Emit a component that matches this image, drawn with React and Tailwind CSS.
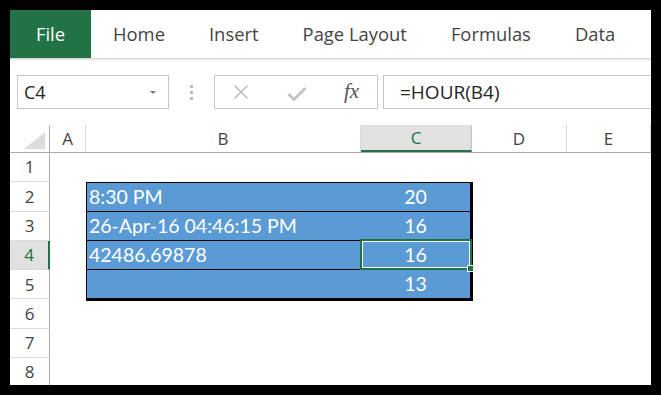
const tabs = ["Home", "Insert", "Page Layout", "Formulas", "Data"];

const columns = [
  { label: "A", width: "w-[36px]" },
  { label: "B", width: "w-[275px]" },
  { label: "C", width: "w-[111px]", active: true },
  { label: "D", width: "w-[95px]" },
  { label: "E", width: "flex-1" },
];

const rowNumbers = [1, 2, 3, 4, 5, 6, 7, 8];

const data = [
  { b: "8:30 PM", c: "20" },
  { b: "26-Apr-16 04:46:15 PM", c: "16" },
  { b: "42486.69878", c: "16", selected: true },
  { b: "", c: "13" },
];

function NameBox() {
  return (
    <div className="flex h-[34px] w-[152px] items-center justify-between border border-[#c6c6c6] pl-[6px] pr-[12px]">
      <span className="text-[18px] text-[#262626]">C4</span>
      <span className="h-0 w-0 border-x-[3px] border-t-[3px] border-x-transparent border-t-[#777]" />
    </div>
  );
}

function FormulaButtons() {
  return (
    <div className="flex h-[34px] w-[164px] items-center border border-[#c6c6c6]">
      <svg width="16" height="16" viewBox="0 0 16 16" className="ml-[18px]">
        <path d="M1.5 1.5 L14.5 14.5 M14.5 1.5 L1.5 14.5" stroke="#bdbdbd" strokeWidth="1.6" fill="none" />
      </svg>
      <svg width="20" height="16" viewBox="0 0 20 16" className="ml-[38px] mt-[4px]">
        <path d="M1.5 8 L7 13.5 L18.5 2" stroke="#c4c4c4" strokeWidth="3" fill="none" />
      </svg>
      <span className="ml-[37px] font-['Liberation_Serif',serif] text-[21px] italic text-[#555]">fx</span>
    </div>
  );
}

function ColumnHeader() {
  return (
    <div className="flex h-[28px] border-b border-[#ababab]">
      <div className="relative w-[40px] shrink-0 border-r border-[#ababab]">
        <svg width="21" height="17" viewBox="0 0 21 17" className="absolute right-[4px] bottom-[3px]">
          <polygon points="21,0 21,17 0,17" fill="#dcdcdc" />
        </svg>
      </div>
      {columns.map((col) => (
        <div
          key={col.label}
          className={`flex shrink-0 items-center justify-center border-r text-[17px] ${col.width} ${
            col.active
              ? "border-[#c0c0c0] border-b-2 border-b-[#217346] bg-[#e1e1e1] text-[#217346]"
              : "border-[#dadada] text-[#444]"
          }`}
        >
          {col.label}
        </div>
      ))}
    </div>
  );
}

function RowHeader() {
  return (
    <div className="w-[40px] shrink-0">
      {rowNumbers.map((n) => (
        <div
          key={n}
          className={`flex h-[29.3px] items-center justify-center border-b border-[#dadada] text-[17px] ${
            n === 4
              ? "border-r-2 border-r-[#217346] bg-[#e1e1e1] text-[#217346]"
              : "border-r border-r-[#ababab] text-[#444]"
          }`}
        >
          {n}
        </div>
      ))}
    </div>
  );
}

function DataBlock() {
  return (
    <div className="ml-[36px] mt-[29px] w-[387px] border-l border-r-[3px] border-b-[3px] border-black font-['Lato',sans-serif] text-[19.5px] text-white">
      {data.map((row, i) => (
        <div key={i} className="flex h-[29px] border-t border-black bg-[#5b9bd5]">
          <div className="flex w-[274px] items-center pl-[2px]">{row.b}</div>
          <div className="relative flex flex-1 items-center justify-center">
            {row.c}
            {row.selected && (
              <div className="absolute left-[-1px] top-[-2px] h-[31px] w-[112px] border-2 border-[#217346]">
                <div className="h-full w-full border border-white" />
                <div className="absolute right-[-4px] bottom-[-4px] h-[7px] w-[7px] border border-white bg-[#217346]" />
              </div>
            )}
          </div>
        </div>
      ))}
    </div>
  );
}

export default function App() {
  return (
    <div className="h-[395px] w-[661px] bg-black p-[10px] font-['Open_Sans',sans-serif]">
      <div className="flex h-full flex-col overflow-hidden bg-white">
        <nav className="flex h-[48px] shrink-0 items-stretch text-[18.4px] text-[#444]">
          <div className="flex w-[81px] items-center justify-center bg-[#217346] text-white">File</div>
          {tabs.map((t) => (
            <div key={t} className="flex items-center px-[22px]">
              {t}
            </div>
          ))}
        </nav>
        <div className="h-[3px] shrink-0 bg-gradient-to-b from-[#d0d0d0] to-white" />

        <div className="mt-[14px] flex shrink-0 items-center pl-[7px]">
          <NameBox />
          <div className="ml-[21px] mr-[21px] flex flex-col gap-[3px]">
            <span className="h-[3px] w-[3px] bg-[#bbb]" />
            <span className="h-[3px] w-[3px] bg-[#bbb]" />
            <span className="h-[3px] w-[3px] bg-[#bbb]" />
          </div>
          <FormulaButtons />
          <div className="ml-[5px] flex h-[34px] flex-1 items-center border-y border-l border-[#c6c6c6] pl-[16px] text-[19px] text-[#262626]">
            =HOUR(B4)
          </div>
        </div>

        <div className="mt-[16px] flex min-h-0 flex-1 flex-col">
          <ColumnHeader />
          <div className="flex min-h-0 flex-1">
            <RowHeader />
            <div className="flex-1">
              <DataBlock />
            </div>
          </div>
        </div>
      </div>
    </div>
  );
}
